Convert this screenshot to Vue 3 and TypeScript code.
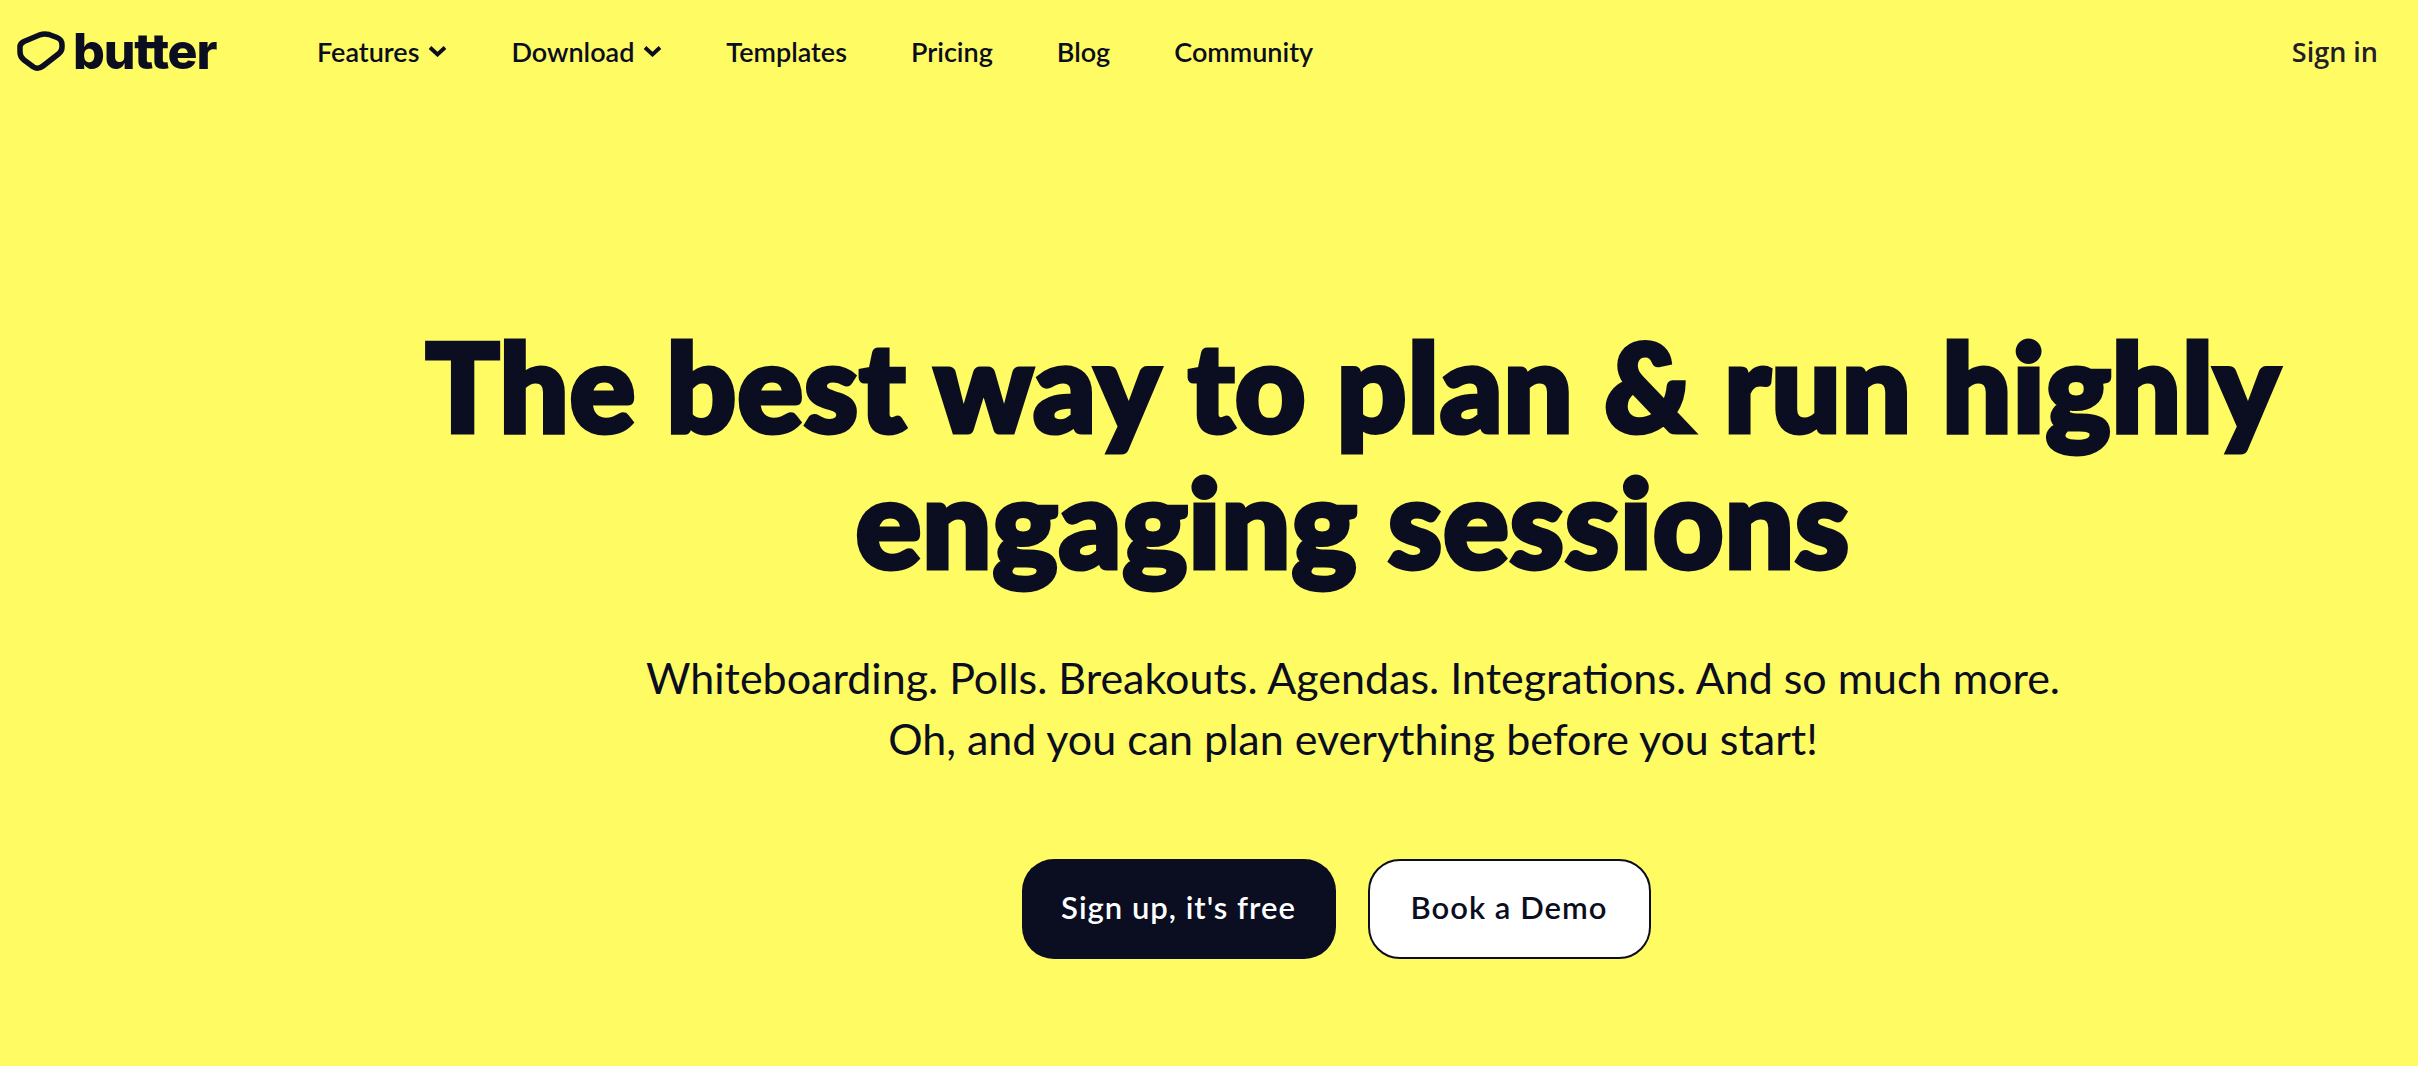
<script setup lang="ts">
interface NavItem { label: string; caret: boolean }
const items: NavItem[] = [
  { label: 'Features', caret: true },
  { label: 'Download', caret: true },
  { label: 'Templates', caret: false },
  { label: 'Pricing', caret: false },
  { label: 'Blog', caret: false },
  { label: 'Community', caret: false },
]
</script>

<template>
  <div class="page">
    <header class="topbar">
      <a class="brand">
        <svg class="mark" viewBox="0 0 48 42" width="48" height="42" fill="none">
          <path d="M7 10.500 L23 3.800 Q27 2.500 32 3.500 L40 6.500 Q45 8.500 45 14 L45 16 Q45 20 42 22.500 L26 35 Q21 38.800 16.500 36 L7 29 Q3 26 3 21 L3 16 Q3 12.500 7 10.500 Z" stroke="#0b0d21" stroke-width="5.500" stroke-linejoin="round"/>
        </svg>
        <span class="word">butter</span>
      </a>
      <nav class="menu">
        <a v-for="i in items" :key="i.label" class="link">
          {{ i.label }}
          <svg v-if="i.caret" class="caret" viewBox="0 0 19 12" width="19" height="12" fill="none">
            <path d="M2 2.500 L9.500 9.500 L17 2.500" stroke="#0b0d21" stroke-width="3.800"/>
          </svg>
        </a>
      </nav>
      <a class="signin">Sign in</a>
    </header>
    <main class="hero">
      <h1>The best way to plan &amp; run highly<br />engaging sessions</h1>
      <p>Whiteboarding. Polls. Breakouts. Agendas. Integrations. And so much more.<br />Oh, and you can plan everything before you start!</p>
      <div class="actions">
        <a class="btn dark">Sign up, it's free</a>
        <a class="btn light">Book a Demo</a>
      </div>
    </main>
  </div>
</template>

<style>
html, body { margin: 0; background: #fffb62; }
</style>

<style scoped>
.page {
  width: 2418px;
  height: 1066px;
  overflow: hidden;
  background: #fffb62;
  color: #0b0d21;
  font-family: "Lato", "Liberation Sans", sans-serif;
  display: flex;
  flex-direction: column;
}
.topbar {
  display: flex;
  align-items: center;
  height: 102px;
  padding: 0 40px 0 17px;
}
.brand { display: flex; align-items: center; gap: 8px; width: 300px; }
.mark { flex: none; margin-top: 2px; }
.word { font-family: "Inter", sans-serif; font-weight: 800; font-size: 50px; letter-spacing: -1.200px; line-height: 1; }
.menu { display: flex; align-items: center; gap: 64px; }
.link { display: flex; align-items: center; gap: 9px; font-size: 27px; font-weight: 600; line-height: 1; color: #0b0d21; }
.caret { flex: none; }
.signin { margin-left: auto; font-family: "Open Sans", sans-serif; font-size: 27px; font-weight: 600; color: #1f2028; }
.hero {
  padding-left: 288px;
  padding-top: 215px;
  text-align: center;
}
h1 {
  margin: 0;
  font-family: "Lato", sans-serif;
  font-weight: 900;
  font-size: 122px;
  line-height: 136px;
  letter-spacing: 1.200px;
  -webkit-text-stroke: 5px #0b0d21;
}
p {
  margin: 58px 0 0;
  font-size: 43px;
  line-height: 61px;
  font-weight: 400;
}
.actions { display: flex; justify-content: center; gap: 32px; margin: 90px 34px 0 0; }
.btn {
  box-sizing: border-box;
  display: flex;
  align-items: center;
  justify-content: center;
  height: 100px;
  padding-bottom: 4px;
  border-radius: 32px;
  font-size: 31px;
  font-weight: 600;
  letter-spacing: 1px;
}
.dark { width: 314px; background: #0b0d21; color: #fff; }
.light { width: 283px; background: #fff; border: 2px solid #0b0d21; color: #0b0d21; }
</style>
